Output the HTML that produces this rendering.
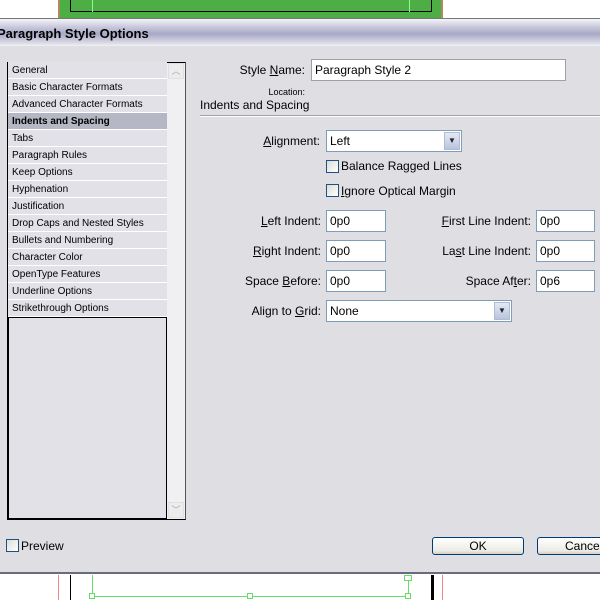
<!DOCTYPE html><html><head><style>
*{margin:0;padding:0;box-sizing:border-box}
body{width:600px;height:600px;overflow:hidden;background:#fff;position:relative;font-family:"Liberation Sans",sans-serif;font-size:12px;color:#000}
.a{position:absolute}
.lst div{height:17px;line-height:18px;padding-left:4px;font-size:10px;border-bottom:1px solid #fff;background:#e1e1e7;white-space:nowrap}
.in{background:#fff;border:1px solid #7f9db9;height:22px;line-height:20px;padding-left:3px;font-size:12px}
.lb{font-size:12px;text-align:right;white-space:nowrap}
.cb{width:13px;height:13px;border:1px solid #1c5180;background:linear-gradient(135deg,#dcdcd6,#fff)}
.dd{position:absolute;right:1px;top:1px;width:16px;height:18px;background:linear-gradient(#e4e8f4,#b8c4dc);border:1px solid #b0bcd4;font-size:8px;text-align:center;line-height:16px;color:#223}
.btn{border:1px solid #003c74;border-radius:3px;background:linear-gradient(#fff,#ecebe6 80%,#d6d0c5);height:18px;line-height:16px;text-align:center;font-size:12px}
</style></head><body>
<div class="a" style="left:58px;top:0;width:385px;height:19px;background:#4cae44;border-left:2px solid #b08a5a;border-right:2px solid #b08a5a"></div>
<div class="a" style="left:70px;top:0;width:362px;height:12px;border:1px solid #000;border-top:none"></div>
<div class="a" style="left:92px;top:0;width:1px;height:12px;background:#8f8"></div>
<div class="a" style="left:409px;top:0;width:1px;height:12px;background:#8f8"></div>
<div class="a" style="left:0;top:18px;width:600px;height:556px;background:#dfdfe3;border-top:1px solid #777;border-bottom:2px solid #6a6a80"></div>
<div class="a" style="left:-3px;top:19px;width:603px;height:27px;background:linear-gradient(#f4f4f8,#c8c8dc 30%,#a8a8c6 55%,#d4d4e2 85%,#f0f0f4);font-weight:bold;font-size:13px;line-height:29px">Paragraph Style Options</div>
<div class="a" style="left:7px;top:62px;width:179px;height:458px;border:1px solid #000;border-right-color:#555;background:#f0f0f3"></div>
<div class="a lst" style="left:8px;top:62px;width:159px">
<div>General</div><div>Basic Character Formats</div><div>Advanced Character Formats</div><div style="background:#b5b7c4;font-weight:bold">Indents and Spacing</div><div>Tabs</div><div>Paragraph Rules</div><div>Keep Options</div><div>Hyphenation</div><div>Justification</div><div>Drop Caps and Nested Styles</div><div>Bullets and Numbering</div><div>Character Color</div><div>OpenType Features</div><div>Underline Options</div><div>Strikethrough Options</div></div>
<div class="a" style="left:8px;top:317px;width:159px;height:202px;border:1px solid #000;background:#e1e1e7"></div>
<div class="a" style="left:168px;top:63px;width:16px;height:16px;background:#ececec;border:1px solid #e0e0e0;color:#aaa;font-size:9px;text-align:center;line-height:14px">︿</div>
<div class="a" style="left:168px;top:502px;width:16px;height:16px;background:#ececec;border:1px solid #e0e0e0;color:#aaa;font-size:9px;text-align:center;line-height:14px">﹀</div>
<div class="a lb" style="left:200px;top:63px;width:105px">Style <u>N</u>ame:</div>
<div class="a in" style="left:311px;top:59px;width:255px;border-color:#a0a0a8">Paragraph Style 2</div>
<div class="a lb" style="left:200px;top:87px;width:105px;font-size:9px">Location:</div>
<div class="a" style="left:200px;top:98px;font-size:12px">Indents and Spacing</div>
<div class="a" style="left:200px;top:115px;width:400px;background:#a0a0a8;border-bottom:1px solid #fff;height:2px"></div>
<div class="a lb" style="left:200px;top:134px;width:120px"><u>A</u>lignment:</div>
<div class="a in" style="left:326px;top:130px;width:136px">Left<div class="dd">▼</div></div>
<div class="a cb" style="left:326px;top:160px"></div><div class="a" style="left:341px;top:159px">Balance Ragged Lines</div>
<div class="a cb" style="left:326px;top:184px"></div><div class="a" style="left:341px;top:184px"><u>I</u>gnore Optical Margin</div>
<div class="a lb" style="left:200px;top:214px;width:121px"><u>L</u>eft Indent:</div>
<div class="a in" style="left:326px;top:210px;width:60px">0p0</div>
<div class="a lb" style="left:400px;top:214px;width:131px"><u>F</u>irst Line Indent:</div>
<div class="a in" style="left:536px;top:210px;width:59px">0p0</div>
<div class="a lb" style="left:200px;top:244px;width:121px"><u>R</u>ight Indent:</div>
<div class="a in" style="left:326px;top:240px;width:60px">0p0</div>
<div class="a lb" style="left:400px;top:244px;width:131px">La<u>s</u>t Line Indent:</div>
<div class="a in" style="left:536px;top:240px;width:59px">0p0</div>
<div class="a lb" style="left:200px;top:274px;width:121px">Space <u>B</u>efore:</div>
<div class="a in" style="left:326px;top:270px;width:60px">0p0</div>
<div class="a lb" style="left:400px;top:274px;width:131px">Space Af<u>t</u>er:</div>
<div class="a in" style="left:536px;top:270px;width:59px">0p6</div>
<div class="a lb" style="left:200px;top:304px;width:121px">Align to <u>G</u>rid:</div>
<div class="a in" style="left:326px;top:300px;width:186px">None<div class="dd">▼</div></div>
<div class="a cb" style="left:6px;top:539px"></div><div class="a" style="left:21px;top:539px">Preview</div>
<div class="a btn" style="left:432px;top:537px;width:92px">OK</div>
<div class="a btn" style="left:537px;top:537px;width:80px;text-align:left;padding-left:27px">Cancel</div>
<div class="a" style="left:58px;top:575px;width:1px;height:25px;background:#e88"></div>
<div class="a" style="left:442px;top:575px;width:1px;height:25px;background:#e88"></div>
<div class="a" style="left:70px;top:575px;width:1px;height:25px;background:#000"></div>
<div class="a" style="left:431px;top:575px;width:3px;height:25px;background:#000"></div>
<div class="a" style="left:92px;top:575px;width:1px;height:21px;background:#6d6"></div>
<div class="a" style="left:408px;top:575px;width:1px;height:21px;background:#6d6"></div>
<div class="a" style="left:92px;top:596px;width:316px;height:1px;background:#6d6"></div>
<div class="a" style="left:89px;top:593px;width:6px;height:6px;border:1px solid #6d6;background:#fff"></div>
<div class="a" style="left:247px;top:593px;width:6px;height:6px;border:1px solid #6d6;background:#fff"></div>
<div class="a" style="left:405px;top:593px;width:6px;height:6px;border:1px solid #6d6;background:#fff"></div>
<div class="a" style="left:404px;top:575px;width:8px;height:6px;border:1px solid #6d6;background:#fff"></div>
</body></html>
